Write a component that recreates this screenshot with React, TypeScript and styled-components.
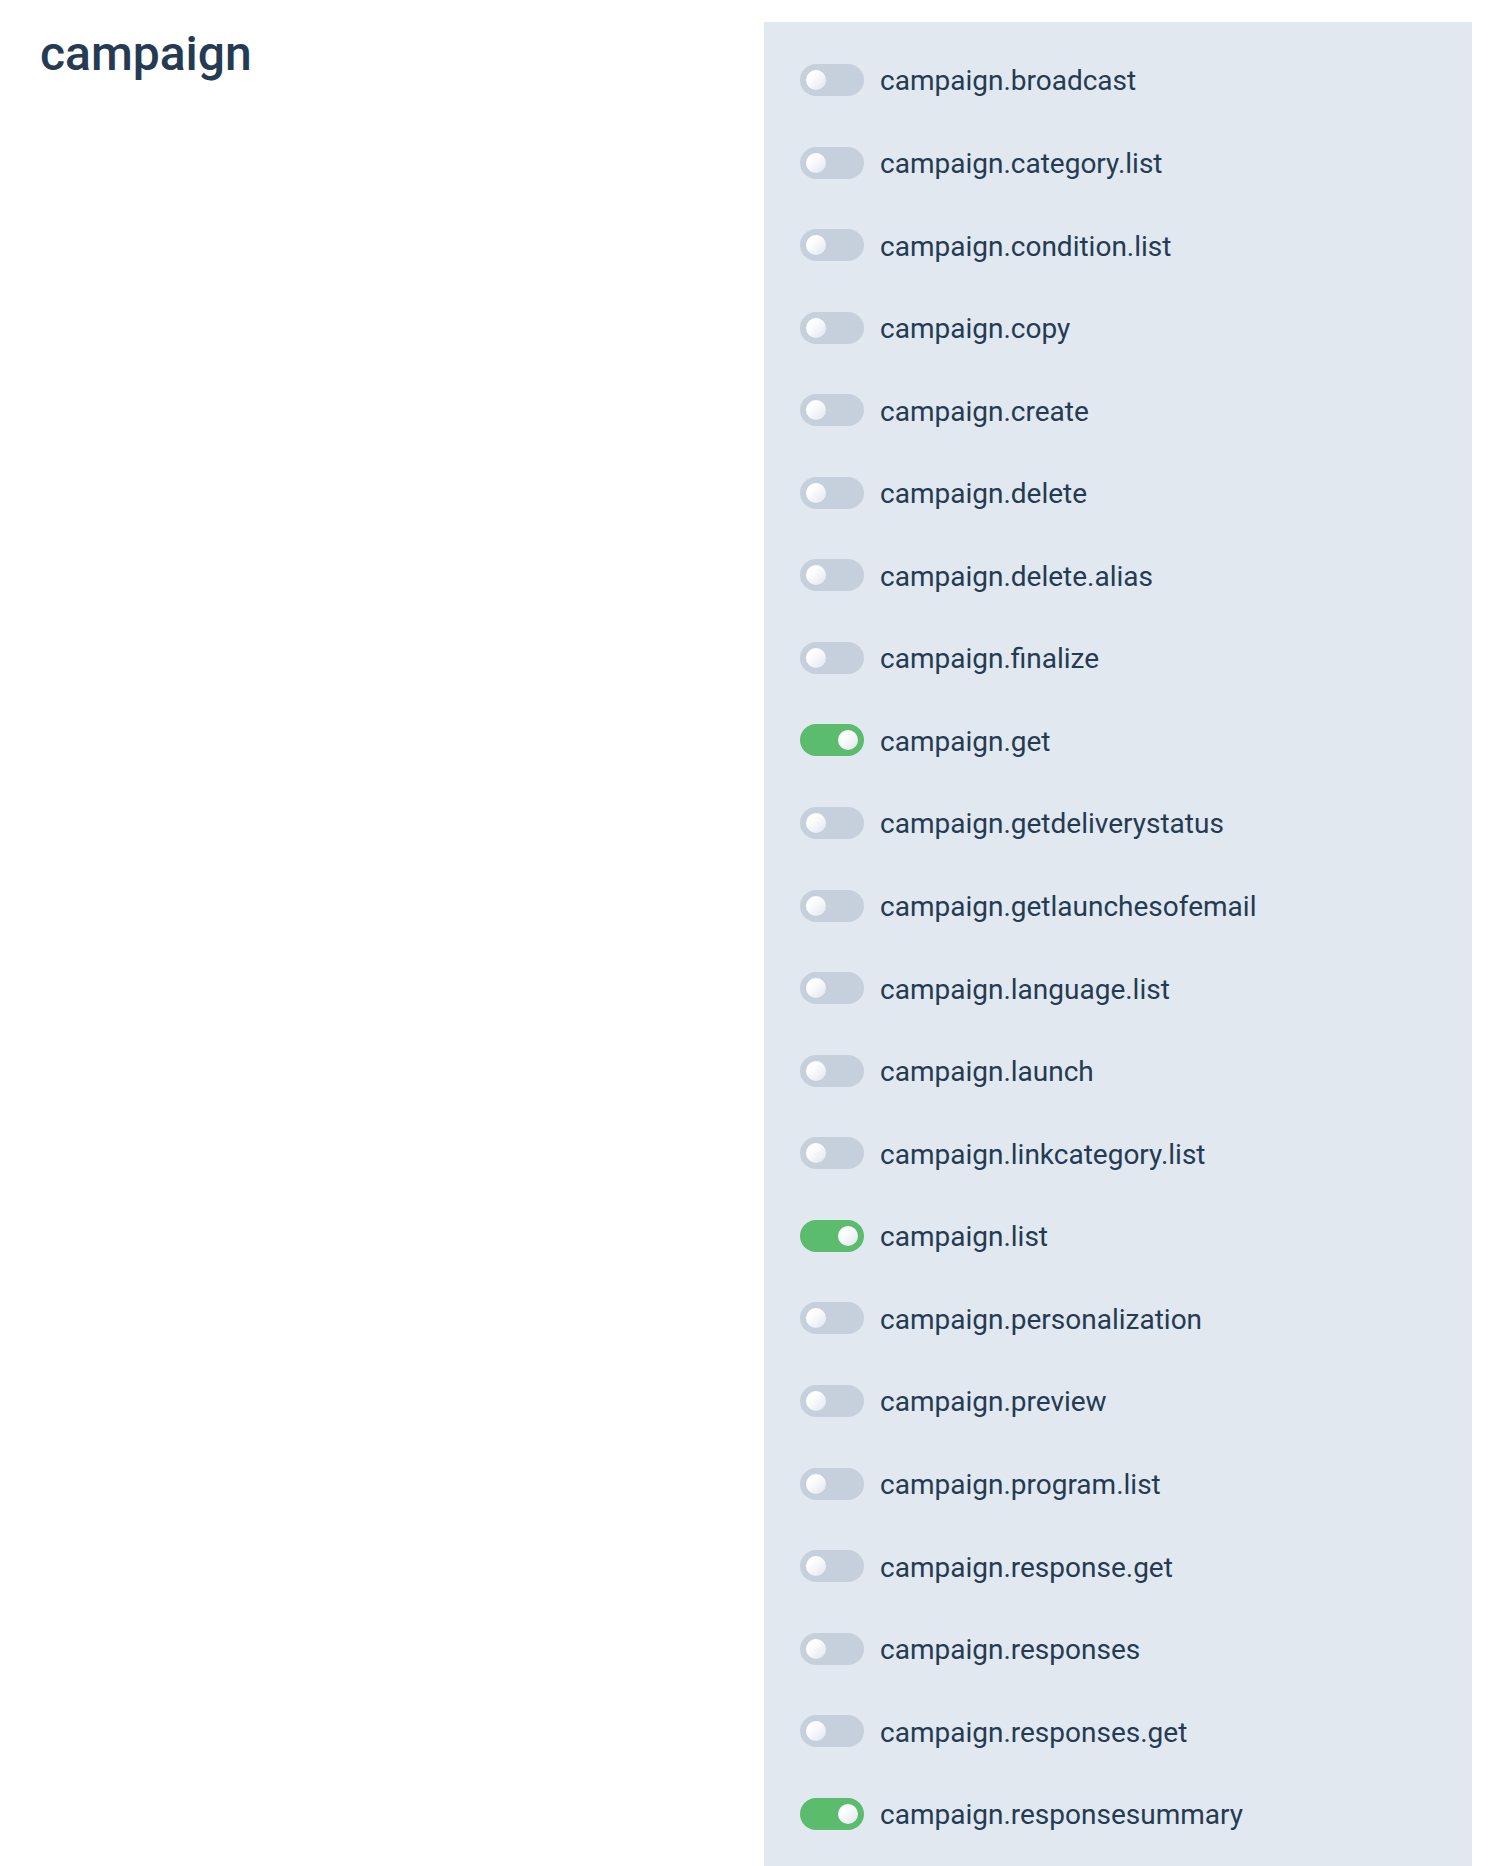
import React from 'react';
import styled, { createGlobalStyle } from 'styled-components';

const GlobalStyle = createGlobalStyle`
  html, body {
    margin: 0;
    padding: 0;
    background: #ffffff;
  }
  body {
    font-family: Roboto, 'Liberation Sans', Arial, sans-serif;
    color: #243b53;
  }
`;

const Page = styled.main`
  display: grid;
  grid-template-columns: 1fr 1fr;
  gap: 16px;
  padding: 22px 40px 0;
  align-items: start;
`;

const Title = styled.h2`
  margin: 0;
  padding-top: 3px;
  font-size: 48px;
  font-weight: 500;
  line-height: 1.2;
  color: #243b53;
`;

const Panel = styled.section`
  background: #e1e8f0;
  padding: 16.7px 36px;
`;

const Row = styled.label`
  display: flex;
  align-items: center;
  gap: 16px;
  height: 82.57px;
  cursor: pointer;
`;

const Track = styled.span<{ $on: boolean }>`
  position: relative;
  flex: none;
  width: 64px;
  height: 32px;
  border-radius: 16px;
  background: ${(p) => (p.$on ? '#5bbc6e' : '#c6d0dc')};
`;

const Knob = styled.span<{ $on: boolean }>`
  position: absolute;
  top: 6px;
  left: ${(p) => (p.$on ? '38px' : '6px')};
  width: 20px;
  height: 20px;
  border-radius: 50%;
  background: linear-gradient(135deg, #ffffff 30%, #dfe5ee 100%);
`;

const Name = styled.span`
  margin-top: 3px;
  font-size: 28px;
  line-height: 1.15;
  color: #243b53;
`;

const permissions: [string, boolean][] = [
  ['campaign.broadcast', false],
  ['campaign.category.list', false],
  ['campaign.condition.list', false],
  ['campaign.copy', false],
  ['campaign.create', false],
  ['campaign.delete', false],
  ['campaign.delete.alias', false],
  ['campaign.finalize', false],
  ['campaign.get', true],
  ['campaign.getdeliverystatus', false],
  ['campaign.getlaunchesofemail', false],
  ['campaign.language.list', false],
  ['campaign.launch', false],
  ['campaign.linkcategory.list', false],
  ['campaign.list', true],
  ['campaign.personalization', false],
  ['campaign.preview', false],
  ['campaign.program.list', false],
  ['campaign.response.get', false],
  ['campaign.responses', false],
  ['campaign.responses.get', false],
  ['campaign.responsesummary', true],
];

const Toggle = ({ on }: { on: boolean }) => (
  <Track $on={on}>
    <Knob $on={on} />
  </Track>
);

const App = () => {
  return (
    <>
      <GlobalStyle />
      <Page>
        <Title>campaign</Title>
        <Panel>
          {permissions.map(([name, on]) => (
            <Row key={name}>
              <Toggle on={on} />
              <Name>{name}</Name>
            </Row>
          ))}
        </Panel>
      </Page>
    </>
  );
};

export default App;
